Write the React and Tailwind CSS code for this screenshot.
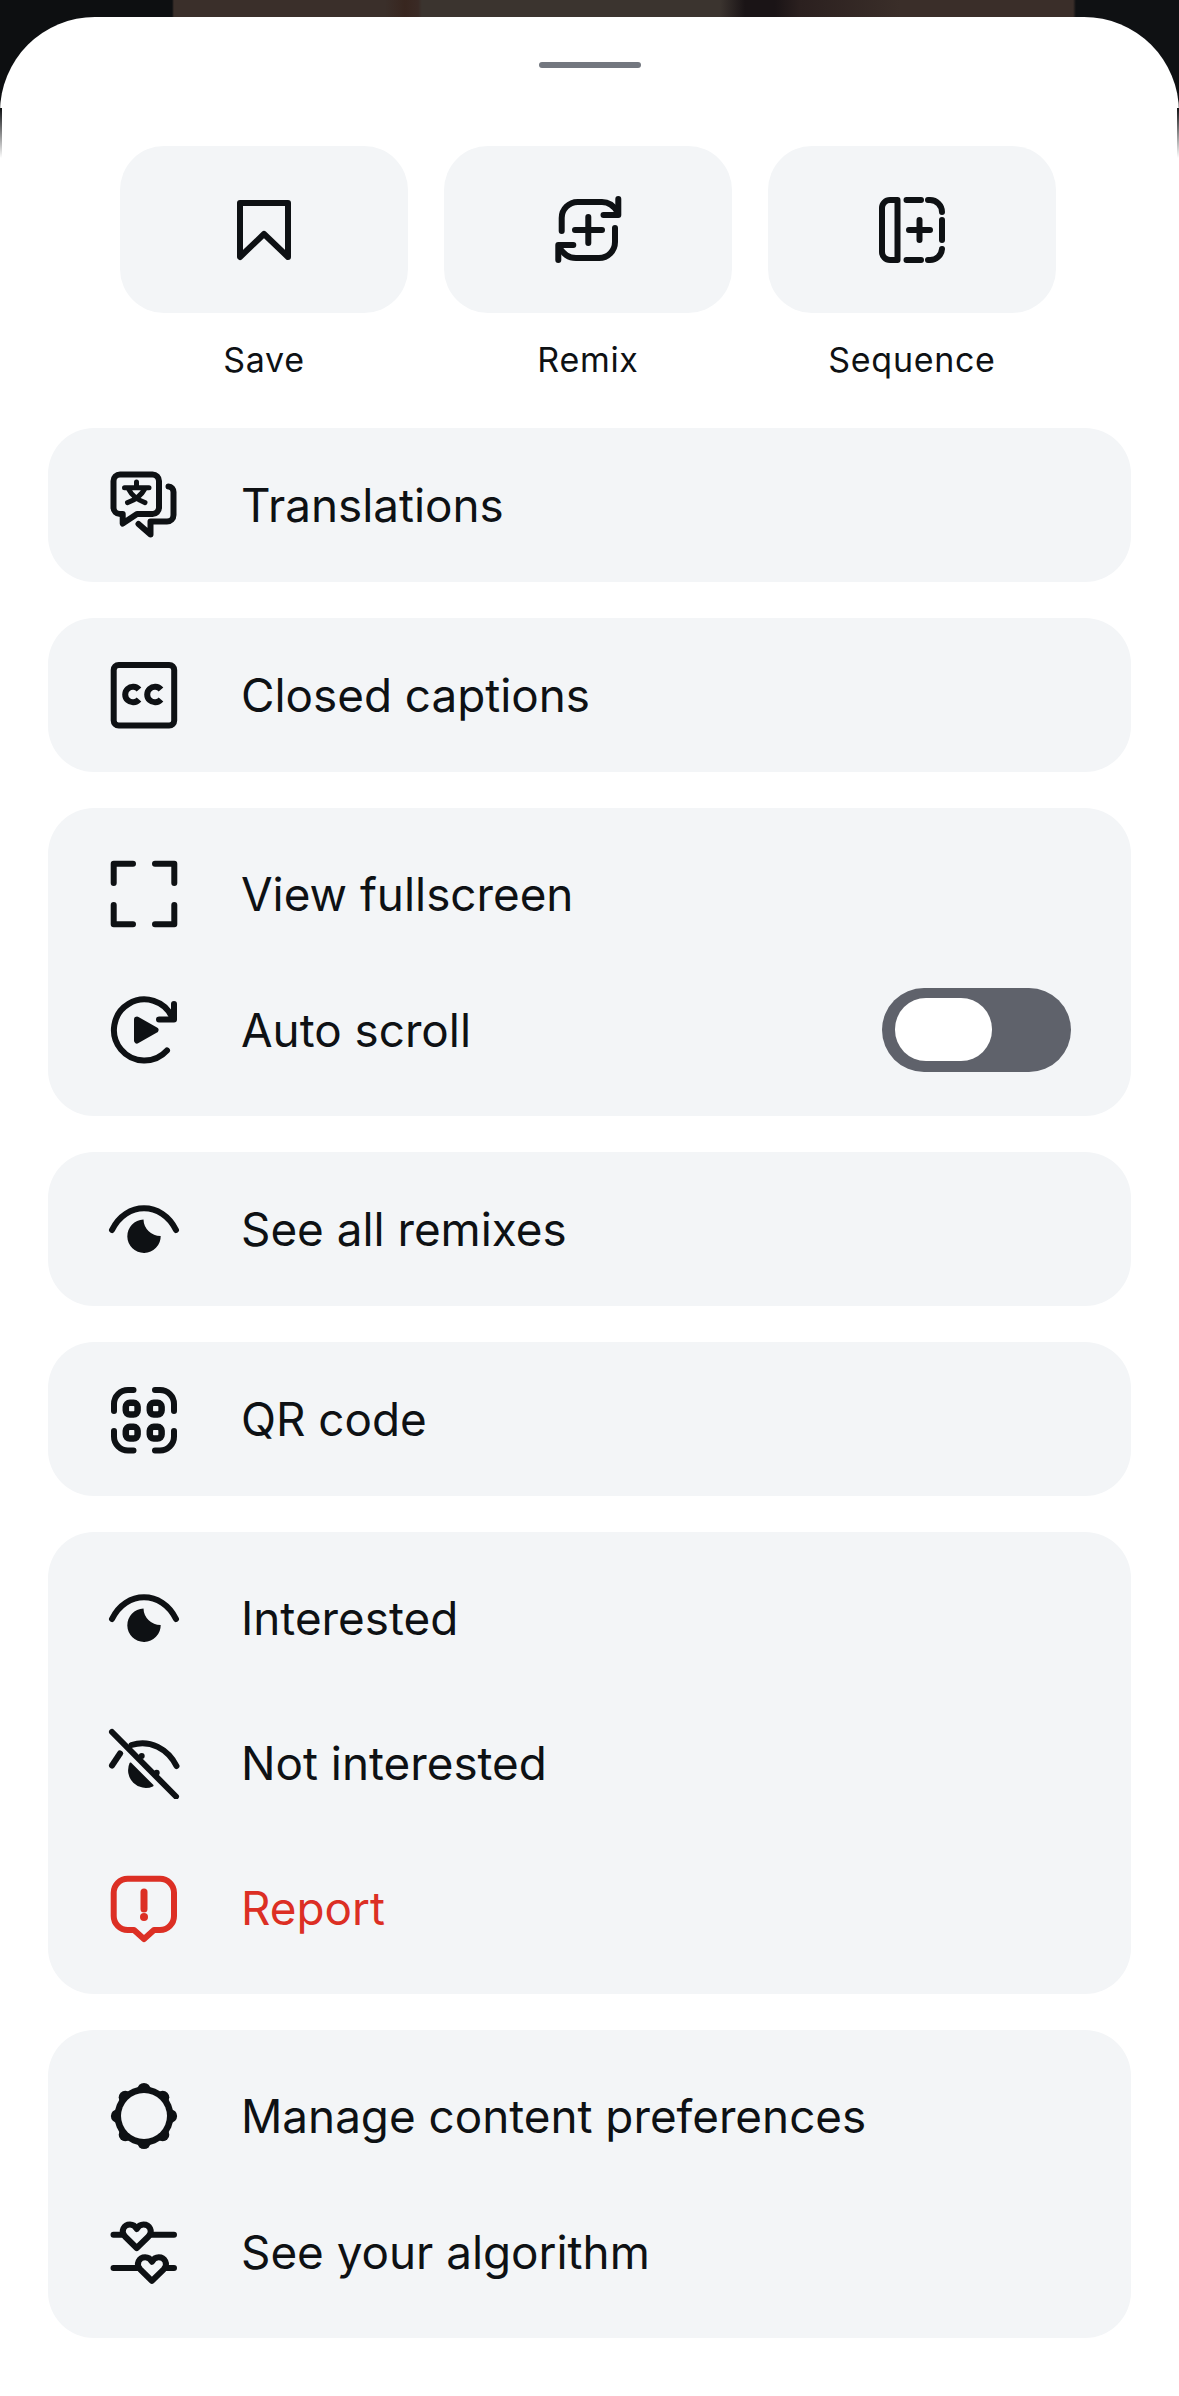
const INK = "#0e1114";
const BG = "#f3f5f7";
const RED = "#dc2f24";

function Ico({ children, color = INK, sw = 6 }) {
  return (
    <svg width="72" height="72" viewBox="0 0 72 72" fill="none" stroke={color} strokeWidth={sw} strokeLinecap="round" strokeLinejoin="round" className="shrink-0">
      {children}
    </svg>
  );
}

const Bookmark = () => (
  <Ico><path d="M12 9H60V63L36 40L12 63Z" /></Ico>
);
const Remix = () => (
  <Ico>
    <path d="M9.7 37V24a16 16 0 0 1 16-16H50c8 0 12 4 15.5 10" />
    <path d="M66.3 5V21H51.5" />
    <path d="M63 34V48a16 16 0 0 1-16 16H24c-8 0-12-4-16.5-10" />
    <path d="M6.3 66V51H21.3" />
    <path d="M36.3 23V49M23 36H50" />
  </Ico>
);
const Sequence = () => (
  <Ico>
    <path d="M21.5 6H14a8 8 0 0 0-8 8V58a8 8 0 0 0 8 8H21.5Z" />
    <path d="M30.5 6H45M52 6h2a12 12 0 0 1 12 12M66 26V46M66 55a12 12 0 0 1-12 11h-2M45 66H30.5" />
    <path d="M43.5 26V46M33 36H54" />
  </Ico>
);
const Translate = () => (
  <Ico>
    <path d="M14.7 45H12a6.5 6.5 0 0 1-6.5-6.5V12A6.5 6.5 0 0 1 12 5.5H44.5A6.5 6.5 0 0 1 51 12V38.5A6.5 6.5 0 0 1 44.5 45H29L14.7 54.5Z" />
    <path d="M60.5 17.5c3 0 5 2.5 5 5.5V46a6.5 6.5 0 0 1-6.5 6.5H42.5V65.5L30.5 55" />
    <path d="M16.5 18.7H41M28.5 13V18.7M37 19.5C33 27 27 31 19.5 33.7M20.5 20C24 27 30 31 37 33.7" strokeWidth="5" />
  </Ico>
);
const CC = () => (
  <Ico>
    <rect x="5.7" y="6" width="60.5" height="60.5" rx="5" />
    <path d="M31 30.5A7.8 7.8 0 1 0 31 40.5M53 30.5A7.8 7.8 0 1 0 53 40.5" strokeWidth="6" strokeLinecap="butt" />
  </Ico>
);
const Fullscreen = () => (
  <Ico>
    <path d="M25 5.7H5.7V25M47 5.7H66.3V25M25 66.3H5.7V47M47 66.3H66.3V47" />
  </Ico>
);
const AutoScroll = () => (
  <Ico>
    <path d="M59 56.5A30.5 30.5 0 1 1 64.5 24" />
    <path d="M66 10V25.5H51" />
    <path d="M29 25.5L47.5 36L29 46.5Z" fill={INK} />
  </Ico>
);
const Eye = () => (
  <Ico>
    <path d="M4 37C18 8 54 8 68 37" />
    <path d="M35.5 26.5A16.7 16.7 0 1 0 52.7 43A17 17 0 0 1 35.5 26.5Z" fill={INK} stroke="none" />
  </Ico>
);
const EyeOff = () => (
  <Ico>
    <path d="M4 5L68 69.5" />
    <path d="M23.5 18C42 12 60 22 68.5 39" />
    <path d="M12 26.5L4 38.5" />
    <path d="M22.5 36.5L44.5 58.5A16.7 16.7 0 0 1 22.5 36.5Z" fill={INK} stroke={INK} strokeWidth="2" />
    <circle cx="33.7" cy="29" r="3" fill={INK} stroke="none" />
    <circle cx="48.7" cy="45.7" r="3" fill={INK} stroke="none" />
  </Ico>
);
const Report = () => (
  <Ico color={RED}>
    <path d="M19.7 6.7H52a14 14 0 0 1 14 14V44a14 14 0 0 1-14 14H46L36 67L26 58H19.7a14 14 0 0 1-14-14V20.7a14 14 0 0 1 14-14Z" />
    <path d="M36 20V37" strokeWidth="7" />
    <circle cx="36" cy="45" r="4" fill={RED} stroke="none" />
  </Ico>
);
const GEAR = [[36,9.5],[54.7,17.3],[62.5,36],[54.7,54.7],[36,62.5],[17.3,54.7],[9.5,36],[17.3,17.3]];
const Gear = () => (
  <Ico>
    {GEAR.map(([x, y], i) => <circle key={i} cx={x} cy={y} r="6.6" fill={INK} stroke="none" />)}
    <circle cx="36" cy="36" r="29.5" fill={INK} stroke="none" />
    <circle cx="36" cy="36" r="23" fill={BG} stroke="none" />
  </Ico>
);
const HEART = "M28.7 32L17 20.5C12 15 16 8.5 22 8.5C25.5 8.5 27.5 10.5 28.7 13C30 10.5 32 8.5 35.5 8.5C41.5 8.5 45.5 15 40.5 20.5Z";
const Algorithm = () => (
  <Ico>
    <path d="M5.5 18.7H66M5.5 52H66" />
    <path d={HEART} fill={BG} />
    <path d={HEART} fill={BG} transform="translate(15.2 32.8)" />
  </Ico>
);
const QR = () => (
  <Ico>
    <path d="M6 28V21A14 14 0 0 1 20 7H25.5M47 7H52A14 14 0 0 1 66 21V28M66 48V53.5A14 14 0 0 1 52 67.5H47M25.5 67.5H20A14 14 0 0 1 6 53.5V48" />
    <rect x="17.8" y="19.8" width="11.8" height="11.8" rx="4" strokeWidth="6.5" />
    <rect x="41.8" y="19.8" width="11.8" height="11.8" rx="4" strokeWidth="6.5" />
    <rect x="17.8" y="43.8" width="11.8" height="11.8" rx="4" strokeWidth="6.5" />
    <rect x="41.8" y="43.8" width="11.8" height="11.8" rx="4" strokeWidth="6.5" />
  </Ico>
);

function Action({ icon, label }) {
  return (
    <div className="flex w-[288px] flex-col items-center">
      <div className="flex h-[167px] w-[288px] items-center justify-center rounded-[44px] bg-[#f3f5f7]">{icon}</div>
      <span className="mt-[27px] text-[34px] leading-[40px] tracking-[0.7px] text-[#0e1114]">{label}</span>
    </div>
  );
}

function Row({ icon, label, red, h, right }) {
  return (
    <div className={`flex items-center pl-[60px] pr-[60px] ${h}`}>
      {icon}
      <span className={`ml-[61px] flex-1 pt-[2px] text-[45.8px] leading-[56px] ${red ? "text-[#dc2f24]" : "text-[#0e1114]"}`}>{label}</span>
      {right}
    </div>
  );
}

function Toggle() {
  return (
    <div className="flex h-[84px] w-[189px] items-center rounded-full bg-[#5f626b] pl-[13px]">
      <div className="h-[63px] w-[97px] rounded-[31px] bg-white" />
    </div>
  );
}

export default function App() {
  return (
    <div className="relative h-[2396px] w-[1179px] overflow-hidden bg-[linear-gradient(90deg,#0d0f11_0,#0d0f11_172px,#3a2f2a_174px,#3a2f2a_385px,#38261f_405px,#3a2a25_418px,#3b342f_422px,#3b342f_720px,#1a1416_745px,#1a1416_775px,#2b201f_800px,#3a2e29_900px,#3a2e29_1073px,#0f1113_1076px)] pt-[17px] font-['Inter',sans-serif]">
      <div className="flex h-[2379px] flex-col rounded-t-[95px] bg-white">
        <div className="mx-auto mt-[45px] h-[6px] w-[102px] rounded-full bg-[#73777f]" />
        <div className="mt-[78px] flex gap-[36px] pl-[120px]">
          <Action icon={<Bookmark />} label="Save" />
          <Action icon={<Remix />} label="Remix" />
          <Action icon={<Sequence />} label="Sequence" />
        </div>
        <div className="mx-[48px] mt-[48px] flex flex-col gap-[36.5px]">
          <div className="rounded-[46px] bg-[#f3f5f7]">
            <Row h="h-[153.5px]" icon={<Translate />} label="Translations" />
          </div>
          <div className="rounded-[46px] bg-[#f3f5f7]">
            <Row h="h-[153.5px]" icon={<CC />} label="Closed captions" />
          </div>
          <div className="rounded-[46px] bg-[#f3f5f7] py-[17.75px]">
            <Row h="h-[136px]" icon={<Fullscreen />} label="View fullscreen" />
            <Row h="h-[136px]" icon={<AutoScroll />} label="Auto scroll" right={<Toggle />} />
          </div>
          <div className="rounded-[46px] bg-[#f3f5f7]">
            <Row h="h-[153.5px]" icon={<Eye />} label="See all remixes" />
          </div>
          <div className="rounded-[46px] bg-[#f3f5f7]">
            <Row h="h-[153.5px]" icon={<QR />} label="QR code" />
          </div>
          <div className="rounded-[46px] bg-[#f3f5f7] py-[13.25px]">
            <Row h="h-[145px]" icon={<Eye />} label="Interested" />
            <Row h="h-[145px]" icon={<EyeOff />} label="Not interested" />
            <Row h="h-[145px]" icon={<Report />} label="Report" red />
          </div>
          <div className="rounded-[46px] bg-[#f3f5f7] py-[17.75px]">
            <Row h="h-[136px]" icon={<Gear />} label="Manage content preferences" />
            <Row h="h-[136px]" icon={<Algorithm />} label="See your algorithm" />
          </div>
        </div>
      </div>
      <div className="absolute left-0 top-[108px] h-[50px] w-[2px] bg-gradient-to-b from-[#0d0f11] to-transparent" />
      <div className="absolute right-0 top-[108px] h-[50px] w-[2px] bg-gradient-to-b from-[#0f1113] to-transparent" />
    </div>
  );
}
